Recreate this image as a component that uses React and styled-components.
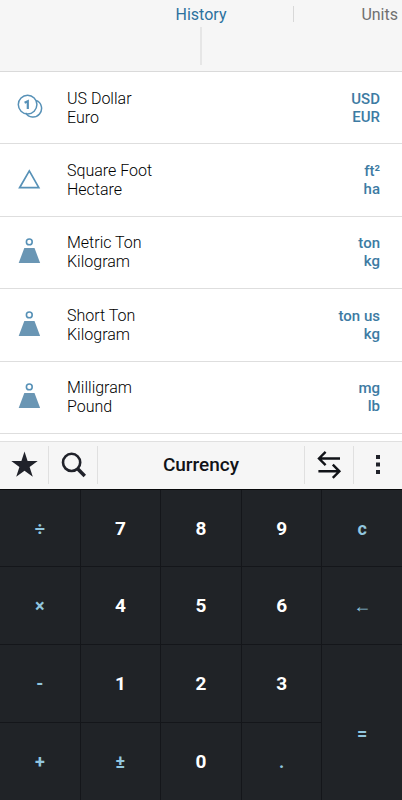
import React from "react";
import styled, { createGlobalStyle } from "styled-components";

const GlobalStyle = createGlobalStyle`
  * { box-sizing: border-box; }
  body { margin: 0; background: #fff; font-family: Roboto, "Liberation Sans", sans-serif; }
  button { font: inherit; border: 0; padding: 0; background: none; cursor: pointer; }
  svg { display: block; }
`;

const Page = styled.main`
  display: flex;
  flex-direction: column;
  min-height: 100vh;
`;

const Header = styled.header`
  height: 72px;
  background: #f6f6f6;
  border-bottom: 1px solid #dadada;
`;

const Tabs = styled.nav`
  display: grid;
  grid-template-columns: 1fr auto 1fr;
  align-items: center;
  height: 27px;
`;

const Tab = styled.button`
  grid-column: 2;
  padding-top: 2px;
  font-size: 16px;
  line-height: 25px;
  font-weight: 400;
  color: ${(p) => (p.$active ? "#2c719e" : "#707070")};
`;

const NextTab = styled.div`
  display: flex;
  align-items: center;
  justify-content: space-between;
  padding: 0 4px 0 67px;
`;

const TabDivider = styled.span`
  width: 1px;
  height: 16px;
  background: #d8d8d8;
`;

const Marker = styled.div`
  width: 2px;
  height: 38px;
  margin: 0 auto;
  background: #e6e6e6;
`;

const HistoryList = styled.ul`
  flex: 1;
  display: grid;
  grid-auto-rows: 1fr;
  margin: 0;
  padding: 0 0 7px;
  list-style: none;
`;

const HistoryRow = styled.li`
  display: grid;
  grid-template-columns: 67px 1fr auto;
  align-items: center;
  min-height: 72px;
  padding-right: 22px;
  border-bottom: 1px solid #dedede;
`;

const RowIcon = styled.span`
  padding: 0 0 2px 17px;
`;

const Names = styled.div`
  font-size: 16px;
  line-height: 19px;
  font-weight: 300;
  color: #000;
`;

const Symbols = styled.div`
  font-size: 15px;
  line-height: 18px;
  font-weight: 500;
  text-align: right;
  color: #3d7ba3;
`;

const Toolbar = styled.div`
  display: flex;
  align-items: center;
  height: 48px;
  padding-bottom: 2px;
  background: #f6f6f6;
  border-top: 1px solid #e0e0e0;
  color: #20222a;
`;

const ToolButton = styled.button`
  display: grid;
  place-items: center;
  width: 49px;
  height: 38px;
  color: inherit;
  border: 0 solid #e0e0e0;
  border-width: ${(p) => (p.$side === "left" ? "0 1px 0 0" : "0 0 0 1px")};
`;

const Category = styled.h1`
  flex: 1;
  margin: 0;
  font-size: 19px;
  line-height: 38px;
  font-weight: 500;
  text-align: center;
  color: #111318;
`;

const Keypad = styled.div`
  display: grid;
  grid-template-columns: repeat(5, 1fr);
  grid-template-rows: 76px repeat(3, 77px);
  gap: 1px;
  background: #14161a;
  border-top: 1px solid #08090b;
`;

const Key = styled.button`
  grid-row: span ${(p) => p.$rows || 1};
  padding-top: ${(p) => (p.$rows === 2 ? "22px" : "0")};
  font-size: ${(p) => (p.$accent ? "18px" : "19px")};
  font-weight: 700;
  color: ${(p) => (p.$accent ? "#91c6df" : "#fff")};
  background: #202327;
`;

const CoinsIcon = () => (
  <svg width="26" height="26" viewBox="0 0 26 26" fill="none" stroke="#5791b7" strokeWidth="1.5">
    <path d="M19.2 6.4A8.6 8.6 0 1 1 8.6 18.8" />
    <circle cx="10.6" cy="10.6" r="9.3" />
    <path d="M7.6 8.8l3.2-1.6v7.8" strokeWidth="2.2" />
  </svg>
);

const AreaIcon = () => (
  <svg width="26" height="26" viewBox="0 0 26 26" fill="none" stroke="#5791b7" strokeWidth="1.7">
    <path d="M12.3 4.9L21.8 21.7H2.6Z" />
  </svg>
);

const WeightIcon = () => (
  <svg width="26" height="26" viewBox="0 0 26 26">
    <circle cx="12.3" cy="3.9" r="2.9" fill="none" stroke="#5791b7" strokeWidth="1.6" />
    <path d="M7.3 10h10.2l5.6 15H1.7Z" fill="#6a96b4" />
  </svg>
);

const StarIcon = () => (
  <svg width="28" height="28" viewBox="0 0 28 28" fill="currentColor">
    <path d="M14.5 .5l3.1 9.5h10.1L19.6 15.9l3.2 9.8L14.5 19.7l-8.3 6 3.2-9.8L1.3 10h10.1Z" />
  </svg>
);

const SearchIcon = () => (
  <svg width="26" height="26" viewBox="0 0 26 26" fill="none" stroke="currentColor">
    <circle cx="11.6" cy="10.4" r="8.6" strokeWidth="2.6" />
    <path d="M17.4 16.6l7.4 7.4" strokeWidth="3.6" />
  </svg>
);

const SwapIcon = () => (
  <svg width="26" height="28" viewBox="0 0 26 28" fill="none" stroke="#111318" strokeWidth="2.4">
    <path d="M24 7.5H3M9.6 .9L3 7.5l6.6 6.6M2.4 20.3H23.5M16.8 13.7l6.6 6.6-6.6 6.6" />
  </svg>
);

const MoreIcon = () => (
  <svg width="4" height="20" viewBox="0 0 4 20" fill="currentColor">
    <path d="M0 0h4v4H0ZM0 7.5h4v4H0ZM0 15h4v4H0Z" />
  </svg>
);

const conversions = [
  { icon: CoinsIcon, names: ["US Dollar", "Euro"], symbols: ["USD", "EUR"] },
  { icon: AreaIcon, names: ["Square Foot", "Hectare"], symbols: ["ft²", "ha"] },
  { icon: WeightIcon, names: ["Metric Ton", "Kilogram"], symbols: ["ton", "kg"] },
  { icon: WeightIcon, names: ["Short Ton", "Kilogram"], symbols: ["ton us", "kg"] },
  { icon: WeightIcon, names: ["Milligram", "Pound"], symbols: ["mg", "lb"] },
];

const keys = [
  "÷", "7", "8", "9", "c",
  "×", "4", "5", "6", "←",
  "-", "1", "2", "3", "=",
  "+", "±", "0", ".",
];

export default function App() {
  return (
    <Page>
      <GlobalStyle />
      <Header>
        <Tabs aria-label="Sections">
          <Tab $active>History</Tab>
          <NextTab>
            <TabDivider />
            <Tab>Units</Tab>
          </NextTab>
        </Tabs>
        <Marker />
      </Header>
      <HistoryList>
        {conversions.map(({ icon: Icon, names, symbols }) => (
          <HistoryRow key={names.join()}>
            <RowIcon><Icon /></RowIcon>
            <Names>{names.map((n) => <div key={n}>{n}</div>)}</Names>
            <Symbols>{symbols.map((s) => <div key={s}>{s}</div>)}</Symbols>
          </HistoryRow>
        ))}
      </HistoryList>
      <Toolbar>
        <ToolButton $side="left" aria-label="Favorites"><StarIcon /></ToolButton>
        <ToolButton $side="left" aria-label="Search"><SearchIcon /></ToolButton>
        <Category>Currency</Category>
        <ToolButton $side="right" aria-label="Swap units"><SwapIcon /></ToolButton>
        <ToolButton $side="right" aria-label="More options"><MoreIcon /></ToolButton>
      </Toolbar>
      <Keypad>
        {keys.map((k) => (
          <Key key={k} $accent={!/\d/.test(k)} $rows={k === "=" ? 2 : 1}>{k}</Key>
        ))}
      </Keypad>
    </Page>
  );
}
